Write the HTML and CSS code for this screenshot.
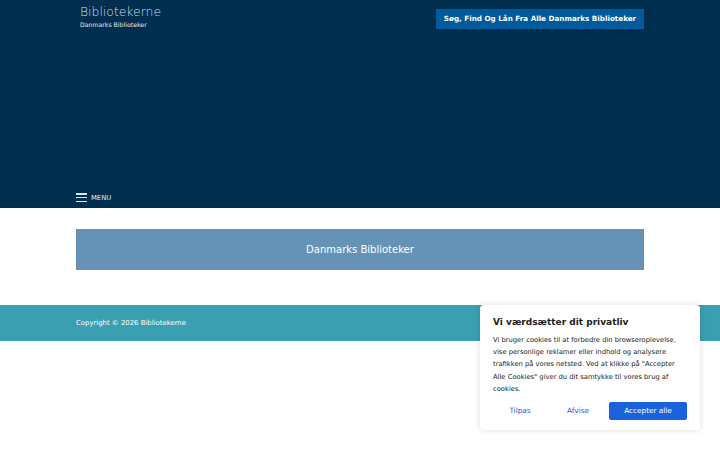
FILE: index.html
```html
<!DOCTYPE html>
<html lang="da">
<head>
<meta charset="utf-8">
<title>Bibliotekerne</title>
<link rel="stylesheet" href="styles.css">
</head>
<body>
<header class="site-header">
  <div class="header-inner">
    <div class="branding">
      <div class="site-title">Bibliotekerne</div>
      <div class="site-desc">Danmarks Biblioteker</div>
    </div>
    <a class="header-btn" href="#">Søg, Find Og Lån Fra Alle Danmarks Biblioteker</a>
  </div>
  <nav class="main-nav">
    <span class="burger"><span></span><span></span><span></span></span>
    <span class="menu-label">MENU</span>
  </nav>
</header>
<main class="content">
  <div class="banner">Danmarks Biblioteker</div>
</main>
<footer class="site-footer">
  <div class="footer-inner">Copyright © 2026 Bibliotekerne</div>
</footer>
<div class="cookie">
  <div class="cookie-title">Vi værdsætter dit privatliv</div>
  <p class="cookie-text">Vi bruger cookies til at forbedre din browseroplevelse, vise personlige reklamer eller indhold og analysere trafikken på vores netsted. Ved at klikke på "Accepter Alle Cookies" giver du dit samtykke til vores brug af cookies.</p>
  <div class="cookie-actions">
    <a class="link-btn" href="#">Tilpas</a>
    <a class="link-btn" href="#">Afvise</a>
    <a class="accept-btn" href="#">Accepter alle</a>
  </div>
</div>
</body>
</html>
```
FILE: styles.css
```css
* { box-sizing: border-box; }
html, body { margin: 0; padding: 0; }
body {
  font-family: "DejaVu Sans", "Liberation Sans", sans-serif;
  background: #fff;
  color: #222;
  width: 720px;
  height: 450px;
  overflow: hidden;
  position: relative;
}
a { text-decoration: none; }
.site-header {
  background: #002e4f;
  height: 208px;
  display: flex;
  flex-direction: column;
  justify-content: space-between;
}
.header-inner {
  display: flex;
  justify-content: space-between;
  align-items: flex-start;
  padding: 4px 76px 0 80px;
}
.site-title {
  font-size: 12.4px;
  color: #d6dde6;
  font-weight: 300;
  line-height: 16px;
}
.site-desc {
  font-size: 6.2px;
  color: #e0e6ee;
  line-height: 10px;
  margin-top: 0;
}
.header-btn {
  margin-top: 5px;
  background: #005a9c;
  color: #fff;
  font-weight: bold;
  font-size: 7.2px;
  height: 20px;
  line-height: 20px;
  width: 208px;
  text-align: center;
  white-space: nowrap;
}
.main-nav {
  display: flex;
  align-items: center;
  padding: 0 0 1px 76px;
  height: 20px;
}
.burger {
  display: flex;
  flex-direction: column;
  justify-content: space-between;
  width: 11px;
  height: 9px;
  margin-right: 4px;
}
.burger span {
  display: block;
  height: 1.5px;
  background: #dfe6ee;
}
.menu-label {
  font-size: 6.8px;
  color: #e6ebf1;
}
.content {
  padding: 21px 76px 35px 76px;
}
.banner {
  background: #6592b6;
  height: 41px;
  display: flex;
  align-items: center;
  justify-content: center;
  color: #fff;
  font-size: 10px;
}
.site-footer {
  background: #3a9fb0;
  height: 36px;
  display: flex;
  align-items: center;
}
.footer-inner {
  padding-left: 76px;
  font-size: 6.9px;
  color: #fff;
}
.cookie {
  position: absolute;
  left: 480px;
  top: 305px;
  width: 220px;
  height: 125px;
  background: #fff;
  border-radius: 4px;
  box-shadow: 0 0 6px rgba(0,0,0,0.13);
  padding: 11px 13px 0 13px;
}
.cookie-title {
  font-weight: bold;
  font-size: 9px;
  color: #212121;
  line-height: 12px;
}
.cookie-text {
  margin: 6px 0 0 0;
  font-size: 6.75px;
  line-height: 12.2px;
  color: #212121;
}
.cookie-actions {
  display: flex;
  align-items: center;
  gap: 4px;
  margin-top: 7px;
}
.link-btn {
  color: #1863dc;
  font-size: 7.3px;
  width: 54px;
  text-align: center;
  height: 18px;
  line-height: 18px;
}
.accept-btn {
  margin-left: auto;
  background: #1863dc;
  color: #fff;
  font-size: 7.3px;
  width: 78px;
  height: 18px;
  line-height: 18px;
  text-align: center;
  border-radius: 2px;
}
```
